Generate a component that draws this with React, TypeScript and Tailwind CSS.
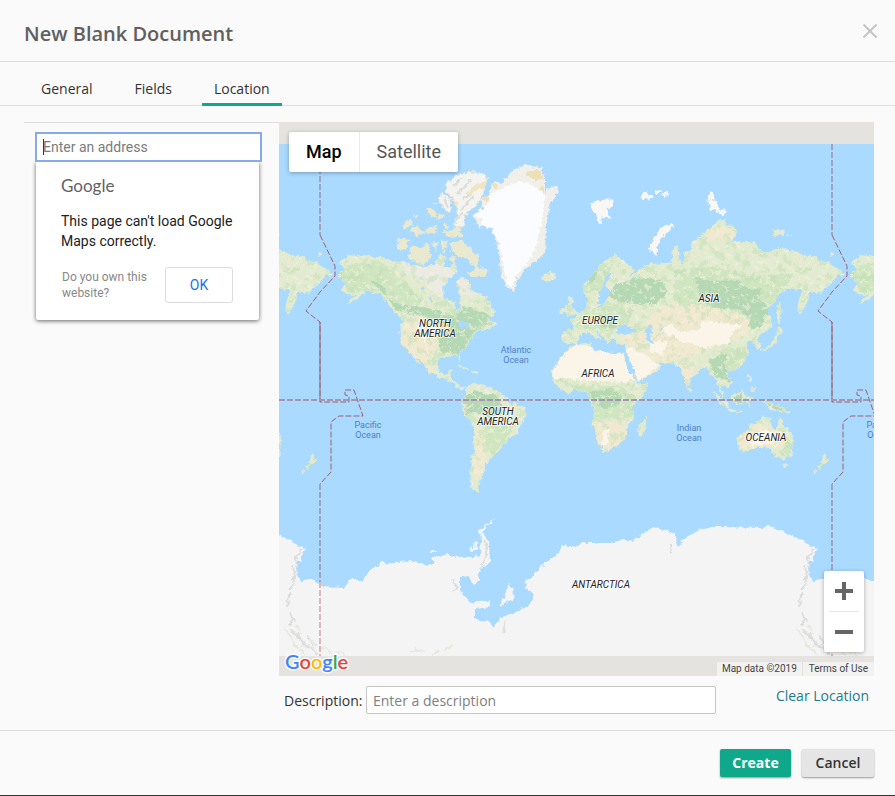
import { useState } from 'react';

const tabs = ['General', 'Fields', 'Location'];

const northAmerica =
  'M338 275L345 268L340 263L350 255L366 256L388 260L403 262L421 267L435 265L440 253L445 258L443 267L449 268L455 263L455 273L448 279L443 287L443 298L455 303L458 313L461 303L460 293L456 283L461 278L468 280L471 290L478 293L486 297L495 313L485 320L497 323L490 328L478 330L470 340L460 353L461 362L458 355L441 357L437 360L438 373L445 375L451 369L451 377L456 385L466 388L461 389L451 382L430 373L425 365L415 353L420 365L411 353L401 343L400 330L403 320L393 310L388 303L381 293L368 290L358 298L346 304L356 295L341 292L345 283Z';
const southAmerica =
  'M466 388L475 384L491 388L505 397L508 403L525 407L526 412L518 432L506 440L498 453L488 460L485 465L482 477L478 483L480 493L471 488L470 477L473 457L475 427L468 418L461 405L465 397Z';
const africa =
  'M575 345L590 343L592 350L605 353L622 353L628 370L638 384L649 383L645 392L632 407L634 418L627 425L625 438L617 447L603 452L598 440L593 425L595 410L590 400L588 392L575 389L568 393L553 382L552 372L561 357L571 347ZM647 418L643 435L638 437L638 427Z';
const eurasia =
  'M563 332L563 343L576 343L582 333L588 332L597 339L600 338L593 329L600 333L608 343L612 338L615 338L617 343L625 345L623 353L638 382L658 370L660 365L645 355L655 362L672 363L680 367L687 388L692 377L703 367L710 372L717 380L723 397L720 384L727 388L732 383L727 372L742 365L748 353L745 342L753 340L757 350L760 347L757 338L772 327L768 310L775 300L788 287L802 290L798 307L800 314L808 302L808 293L822 292L838 275L846 275L835 267L822 260L802 255L782 248L762 253L755 243L732 242L738 230L725 223L722 219L702 235L692 243L693 252L685 252L682 270L677 245L672 253L673 263L645 265L638 272L625 280L635 270L615 255L602 263L583 287L588 300L586 308L578 315L571 320L575 328Z';
const oceania =
  'M738 437L739 448L742 452L760 446L771 448L774 455L783 459L790 456L794 444L791 434L784 426L780 417L777 430L771 427L770 418L761 417L757 424L751 425L746 432ZM783 464L787 464L785 468ZM824 454L828 460L820 468L814 473L822 463Z';
const islands =
  // british isles, iceland, japan, south east asia, new guinea, caribbean
  'M568 299L573 297L571 304L578 313L567 316L569 308ZM562 308L566 305L567 312L561 313ZM543 274L552 272L556 277L549 281L543 279ZM761 351L769 346L775 338L778 334L776 344L768 348L762 351ZM777 333L779 327L784 331L779 334ZM779 301L781 312L779 325L777 312ZM748 374L751 376L750 382ZM752 387L755 388L753 392ZM732 396L742 391L745 395L742 404L735 403L732 399ZM713 392L726 401L729 409L720 402ZM728 409L744 412L728 411ZM747 397L752 397L748 402L751 408L746 403ZM762 401L772 404L782 407L789 413L778 411L770 409ZM690 388L692 392L690 392ZM458 366L468 369L460 367ZM471 370L479 373L472 373Z';
const arcticIslands =
  'M453 243L461 240L470 248L480 257L478 267L488 270L485 277L470 277L466 273L475 269L466 257L458 257L453 250ZM399 238L410 240L406 247L400 252L397 246ZM411 245L420 248L428 242L431 255L425 264L415 263L408 257ZM401 225L410 219L413 224L404 230ZM411 229L419 225L425 234L415 237ZM426 207L434 209L438 219L428 214ZM430 227L438 226L434 235L426 232ZM443 230L461 231L463 236L448 237ZM444 222L450 226L445 229ZM438 213L444 216L440 220ZM432 242L438 241L436 251ZM441 240L448 242L443 253ZM449 258L455 256L456 262L450 262ZM450 243L454 243L451 253ZM413 214L419 216L414 218ZM434 201L438 203L434 204ZM452 229L458 225L462 229L456 232ZM318 252L323 253L319 255ZM775 229L783 230L784 235L772 236ZM787 233L793 236L788 236Z';
const ellesmere =
  'M448 182L456 176L468 172L482 174L489 179L483 188L482 196L476 205L466 214L463 227L453 225L457 218L457 206L452 198L445 190ZM441 192L450 198L451 213L443 208L439 200Z';
const polarIsles =
  'M591 204L604 200L613 200L612 207L605 209L610 218L602 217L600 224L596 215ZM641 198L645 193L652 196L650 199ZM656 190L661 192L657 194ZM663 195L669 191L668 195ZM707 200L711 191L716 199ZM709 201L716 201L719 210L711 210ZM718 210L726 210L724 216L718 214ZM649 249L655 236L663 227L674 223L669 231L662 237L657 246L656 255Z';
const greenlandRim =
  'M473 215L483 208L480 199L488 196L490 188L495 181L501 184L507 178L511 171L526 165L541 168L545 180L545 192L551 186L559 187L557 194L550 203L546 227L545 253L528 267L516 280L514 292L508 288L501 275L500 260L496 240L491 228L478 226Z';
const greenlandIce =
  'M473 216L486 206L492 193L506 187L516 182L527 182L538 188L545 197L543 215L539 235L535 251L527 263L516 276L512 288L507 283L504 270L502 256L499 243L493 229L480 225L483 219Z';
const antarctica =
  'M320 586L345 587L351 578L363 581L368 572L381 563L411 561L425 565L433 563L433 557L448 555L461 558L480 555L481 537L478 531L495 518L483 532L489 543L490 560L478 572L480 580L475 585L468 577L460 578L460 590L470 603L491 600L490 607L475 609L475 617L481 621L491 622L493 627L501 617L516 612L533 602L532 592L525 588L526 582L545 563L561 552L561 545L578 547L582 543L612 543L623 539L632 541L653 526L675 533L675 540L679 547L682 540L702 528L718 527L762 528L768 526L783 532L802 540L807 545L818 548L810 563L808 572L812 582L823 578L832 586L836 586V668H316V586ZM508 583L514 588L513 600L500 606L505 597ZM430 551L440 551L432 553ZM475 538L478 548L474 552L469 550L474 547Z';
const land = northAmerica + southAmerica + africa + eurasia + oceania + islands;

const tundra =
  'M403 262L443 262L456 272L443 287L444 299L456 304L458 310L440 297L425 284L408 273ZM456 283L461 278L468 280L478 293L470 297L461 293Z';
const forest =
  'M388 299L402 305L428 308L455 318L463 307L475 309L492 316L490 325L478 327L466 343L459 355L441 352L438 340L446 328L430 317L408 314L395 309ZM370 280L381 284L391 300L378 288ZM463 396L475 391L495 395L502 403L504 412L490 418L478 413L466 414ZM590 391L612 390L622 395L620 404L604 409L594 402ZM606 296L616 284L640 277L661 280L668 293L655 304L630 304ZM695 278L715 281L738 280L750 290L762 288L760 300L772 310L762 326L751 330L742 310L715 307L700 301ZM709 361L727 351L725 370L731 382L716 378ZM596 315L611 316L616 328L602 327ZM589 268L599 263L595 279L586 288ZM733 397L742 393L742 404L735 402ZM764 402L785 409L776 410Z';
const meadow =
  'M338 268L378 259L403 281L423 301L402 309L384 291L348 292ZM441 310L475 308L486 325L463 350L441 355L436 335ZM485 424L505 417L510 432L494 455L484 450L480 438ZM578 313L592 310L612 305L633 309L629 322L610 330L585 329ZM583 293L602 263L612 264L604 291ZM674 270L713 267L755 275L792 274L785 290L765 310L747 328L740 316L698 307L674 302ZM723 349L746 347L746 362L725 374L706 368ZM556 379L585 386L620 386L635 397L632 417L620 419L597 418L592 402ZM777 430L783 427L793 445L789 457L781 455L786 444Z';
const steppe =
  'M403 326L418 316L431 320L438 330L434 350L427 362L437 375L430 374L400 341ZM650 315L670 302L700 306L730 310L750 319L748 334L720 345L700 352L668 363L640 350L622 342L617 336L648 333L645 326ZM475 425L482 433L487 447L485 465L478 483L473 470ZM593 422L610 421L632 427L626 439L615 449L602 452ZM738 437L757 424L777 429L786 436L782 448L761 447L742 452ZM677 363L692 359L695 370L687 386ZM722 226L739 232L735 241L702 240L705 233ZM624 345L646 354L672 362L660 366L640 383Z';
const desert =
  'M552 373L561 357L575 344L622 352L636 378L628 382L590 381L553 378ZM625 347L642 352L659 366L639 382L629 363ZM670 333L697 330L735 329L728 343L705 347L684 343ZM703 321L728 323L744 325L732 332L700 331ZM660 328L672 324L680 334L667 336ZM749 436L765 430L779 435L772 444L752 445ZM418 330L428 334L425 342ZM650 340L666 342L663 355L650 351ZM603 430L609 430L608 443L601 447Z';
const inlandSea =
  'M608 273L611 275L605 286L610 291L604 303L599 307L599 294L603 285ZM604 290L615 292L605 295ZM616 333L620 325L629 326L638 331L628 335ZM645 331L649 325L653 330L650 335L653 343L648 342ZM455 323L466 321L469 329L460 326ZM430 296L433 301L431 303ZM422 287L428 289L422 290ZM660 328L665 327L663 331ZM620 347L625 348L637 380L634 379Z';
const dateLine =
  'M320 235L335 266V276L320 292L306 311L320 322V402H349V396L345 395V390H354L363 416H339L331 422V472L320 484';

// one copy of the world, repeated on both sides of the date line
function World() {
  return (
    <g id="world">
      <g filter="url(#coast)">
        <path d={land} fill="#e2ebcf" stroke="#e2ebcf" strokeWidth="1" />
        <g clipPath="url(#land-clip)">
          <path d={meadow} fill="#cfe6c1" />
          <path d={forest} fill="#b4d8b3" />
          <path d={steppe} fill="#f0e9cf" />
          <path d={tundra} fill="#ecebe3" />
          <rect x="320" y="220" width="530" height="280" filter="url(#woods)" opacity="0.45" />
          <rect x="320" y="220" width="530" height="280" filter="url(#relief)" opacity="0.6" />
          <path d={desert} fill="#faf5e8" />
        </g>
        <path d={inlandSea} fill="#aadaff" />
        <path d={arcticIslands} fill="#e9e9cf" />
        <path d={ellesmere} fill="#f3f3f0" stroke="#e6e4da" />
        <path
          d="M452 186L463 178M458 193L471 180M463 200L478 186M461 210L474 196M444 197L448 208M457 220L462 213"
          stroke="#dcdcd8"
          strokeWidth="2"
          fill="none"
        />
        <path d="M464 194L476 185L487 180L484 187L470 194ZM453 200L458 202L456 210ZM448 232L459 233L452 235Z" fill="#efe5c4" />
        <path d={polarIsles} fill="#f8f7f4" stroke="#f8f7f4" />
        <path d={greenlandRim} fill="#f0efea" />
        <path d="M527 170L540 170L544 179L536 181L527 175ZM482 198L489 196L489 201L483 202ZM491 183L497 184L497 190ZM540 186L544 190L543 197Z" fill="#ede0b9" />
        <path d={greenlandIce} fill="#fbfcff" />
      </g>
      <path d={antarctica} fill="#f4f4f4" filter="url(#ice-edge)" />
      <g fill="none" filter="url(#ice-edge)">
        <path
          d="M814 549L808 558L809 566M805 566L807 576L804 582M807 583L801 590M803 593L798 602M799 598L800 606M801 612L805 620L801 626M805 616L808 623M803 630L811 638M810 633L815 645M814 641L821 648M819 636L826 646M823 647L829 655M484 540L487 548L485 560L481 566M453 579L457 588L454 592M671 544L672 554M506 621L503 632"
          stroke="#dddddd"
          strokeWidth="2"
        />
        <path
          d="M797 628L803 638M802 637L811 650M812 648L818 655M808 626L812 630M825 640L829 647M322 646L334 655M336 651L344 655M410 653L416 650L424 652M432 655L438 650M444 651L452 645"
          stroke="#e8e8de"
          strokeWidth="2"
        />
      </g>
    </g>
  );
}

function DateLine() {
  return (
    <g id="date-line" fill="none" strokeWidth="1">
      <path d="M320 144V235M320 484V582" stroke="#a3a3c0" strokeWidth="2" strokeDasharray="6 2" />
      <path d="M320 322V402" stroke="#a3a3c0" strokeWidth="2" />
      <path d={dateLine} stroke="#a0606f" strokeDasharray="6 2" />
      <path d="M320 582V656" stroke="#dbb8bb" strokeWidth="2" strokeDasharray="6 2" />
    </g>
  );
}

function WorldMap() {
  return (
    <svg
      viewBox="279 122 595 554"
      preserveAspectRatio="xMidYMid slice"
      className="block h-full w-full"
      role="img"
      aria-label="World map"
    >
      <defs>
        <filter id="coast" filterUnits="userSpaceOnUse" x="300" y="150" width="560" height="360" colorInterpolationFilters="sRGB">
          <feTurbulence type="fractalNoise" baseFrequency="0.22" numOctaves="3" seed="4" />
          <feDisplacementMap in="SourceGraphic" scale="6" xChannelSelector="R" yChannelSelector="G" />
        </filter>
        <filter id="ice-edge" filterUnits="userSpaceOnUse" x="320" y="500" width="512" height="180" colorInterpolationFilters="sRGB">
          <feTurbulence type="fractalNoise" baseFrequency="0.2" numOctaves="2" seed="9" />
          <feDisplacementMap in="SourceGraphic" scale="6" xChannelSelector="R" yChannelSelector="G" />
        </filter>
        <filter id="woods" x="0" y="0" width="1" height="1" colorInterpolationFilters="sRGB">
          <feTurbulence type="fractalNoise" baseFrequency="0.12" numOctaves="4" seed="12" />
          <feColorMatrix values="0 0 0 0 0.74  0 0 0 0 0.87  0 0 0 0 0.70  0 9 0 0 -4.8" />
        </filter>
        <filter id="relief" x="0" y="0" width="1" height="1" colorInterpolationFilters="sRGB">
          <feTurbulence type="fractalNoise" baseFrequency="0.2" numOctaves="3" seed="31" />
          <feColorMatrix values="0 0 0 0 0.95  0 0 0 0 0.94  0 0 0 0 0.87  0 0 9 0 -5.2" />
        </filter>
        <clipPath id="land-clip">
          <path d={land} />
        </clipPath>
      </defs>
      <rect x="279" y="122" width="595" height="554" fill="#e5e3df" />
      <rect x="279" y="144" width="595" height="512" fill="#aadaff" />
      <World />
      <use href="#world" x="-512" />
      <use href="#world" x="512" />
      <DateLine />
      <use href="#date-line" x="512" />
      <rect x="279" y="656" width="595" height="20" fill="#e5e3df" />
      <path d="M279 400H874" stroke="#a795ae" strokeWidth="2" strokeDasharray="6 2" />
      <g
        className="font-['Roboto',sans-serif] text-[10px] italic"
        fill="#222"
        stroke="#fff"
        strokeWidth="2"
        strokeOpacity="0.7"
        paintOrder="stroke"
        textAnchor="middle"
      >
        <text x="435" y="327">NORTH</text>
        <text x="435" y="337">AMERICA</text>
        <text x="498" y="415">SOUTH</text>
        <text x="498" y="425">AMERICA</text>
        <text x="600" y="324">EUROPE</text>
        <text x="709" y="302">ASIA</text>
        <text x="598" y="377">AFRICA</text>
        <text x="766" y="441">OCEANIA</text>
        <text x="601" y="588">ANTARCTICA</text>
      </g>
      <g className="font-['Roboto',sans-serif] text-[9px]" fill="#4f80c4" textAnchor="middle">
        <text x="368" y="428">Pacific</text>
        <text x="368" y="438">Ocean</text>
        <text x="880" y="428">Pacific</text>
        <text x="880" y="438">Ocean</text>
        <text x="516" y="353">Atlantic</text>
        <text x="516" y="363">Ocean</text>
        <text x="689" y="431">Indian</text>
        <text x="689" y="441">Ocean</text>
      </g>
    </svg>
  );
}

export default function App() {
  const [activeTab, setActiveTab] = useState('Location');
  const [mapType, setMapType] = useState('Map');

  return (
    <div className="border-b border-[#333] bg-[#fafafa] font-['Open_Sans',sans-serif] text-sm text-[#333]">
      {/* Header */}
      <header className="flex h-[62px] items-center justify-between border-b border-[#dedede] pt-[6px] pr-[18px] pl-6">
        <h1 className="text-xl font-[560] text-[#606060]">New Blank Document</h1>
        <button aria-label="Close" className="pb-[6px] text-[#c4c4c4]">
          <svg viewBox="0 0 14 14" className="size-[14px]" fill="none" stroke="currentColor" strokeWidth="2">
            <path d="M0.5 0.5L13.5 13.5M13.5 0.5L0.5 13.5" />
          </svg>
        </button>
      </header>

      {/* Tabs */}
      <nav className="flex h-11 items-end gap-[18px] border-b border-[#dedede] pl-[29px]">
        {tabs.map((tab) => (
          <button
            key={tab}
            onClick={() => setActiveTab(tab)}
            className={`-mb-px h-8 border-b-3 px-3 ${
              activeTab === tab ? 'border-[#10a88b]' : 'border-transparent'
            }`}
          >
            {tab}
          </button>
        ))}
      </nav>

      {/* Location */}
      <main className="flex pt-4 pr-[21px] pl-6">
        <div className="w-[255px] shrink-0 border-t border-[#dedede] pt-[9px] pl-[11px] font-['Roboto',sans-serif]">
          <div className="relative w-[227px]">
            <input
              aria-label="Address"
              placeholder="Enter an address"
              className="block h-[30px] w-full border-2 border-[#86abe9] bg-white px-[6px] text-sm outline-none placeholder:text-[#7b7b7b]"
            />
            <span className="absolute top-[7px] left-2 h-4 w-px bg-[#333]" />
          </div>
          <section className="ml-px h-[158px] w-[223px] rounded-b-xs bg-white px-[25px] pt-3 shadow-[0_1px_4px_rgba(0,0,0,0.6)]">
            <p className="font-['Lato',sans-serif] text-[17px] leading-6 text-[#5f6368]">Google</p>
            <p className="mt-[13px] text-sm leading-5 whitespace-nowrap text-[#212121]">
              This page can't load Google
              <br />
              Maps correctly.
            </p>
            <div className="mt-4 flex items-center gap-1">
              <a href="#" className="w-[100px] pl-px text-xs leading-4 text-[#888]">
                Do you own this website?
              </a>
              <button className="h-9 w-[68px] rounded-[3px] border border-[#dadce0] text-sm text-[#1a73e8]">OK</button>
            </div>
          </section>
        </div>

        <div className="min-w-0 flex-1">
          <div className="relative h-[554px] overflow-hidden font-['Roboto',sans-serif]">
            <WorldMap />
            <div className="absolute top-[10px] left-[10px] flex h-10 rounded-xs bg-white text-lg shadow-[0_1px_4px_rgba(0,0,0,0.3)]">
              {['Map', 'Satellite'].map((type) => (
                <button
                  key={type}
                  onClick={() => setMapType(type)}
                  className={`px-[17px] not-first:border-l not-first:border-[#ebebeb] ${
                    mapType === type ? 'font-medium text-black' : 'text-[#565656]'
                  }`}
                >
                  {type}
                </button>
              ))}
            </div>
            <div className="absolute right-[10px] bottom-6 flex w-10 flex-col items-center rounded-xs bg-white shadow-[0_1px_4px_rgba(0,0,0,0.3)]">
              <button aria-label="Zoom in" className="flex h-10 w-10 items-center justify-center">
                <svg viewBox="0 0 18 18" className="size-[18px]" fill="#666">
                  <path d="M7 0h4v7h7v4h-7v7H7v-7H0V7h7z" />
                </svg>
              </button>
              <span className="h-px w-[30px] bg-[#e6e6e6]" />
              <button aria-label="Zoom out" className="flex h-10 w-10 items-center justify-center">
                <svg viewBox="0 0 18 18" className="size-[18px]" fill="#666">
                  <path d="M0 7h18v4H0z" />
                </svg>
              </button>
            </div>
            <a href="#" aria-label="Google" className="absolute bottom-0 left-[5px]">
              <svg
                viewBox="0 0 66 28"
                className="h-7 w-[66px] font-['Lato',sans-serif] text-[20px] font-semibold"
                stroke="#fff"
                strokeWidth="3"
                strokeOpacity="0.8"
                paintOrder="stroke"
              >
                <text x="1" y="21">
                  <tspan fill="#4285f4">G</tspan>
                  <tspan fill="#ea4335">o</tspan>
                  <tspan fill="#fbbc05">o</tspan>
                  <tspan fill="#4285f4">g</tspan>
                  <tspan fill="#34a853">l</tspan>
                  <tspan fill="#ea4335">e</tspan>
                </text>
              </svg>
            </a>
            <div className="absolute right-0 bottom-0 flex h-[14px] bg-[#f2f2f0] text-[10px] leading-[14px] text-[#444]">
              <span className="px-[5px]">Map data ©2019</span>
              <a href="#" className="border-l border-[#e0e0dd] px-[6px]">
                Terms of Use
              </a>
            </div>
          </div>

          <div className="flex h-[54px] items-start pt-[10px] pr-[5px] pl-[5px]">
            <label htmlFor="description" className="w-[82px] shrink-0 leading-[30px] whitespace-nowrap">
              Description:
            </label>
            <input
              id="description"
              placeholder="Enter a description"
              className="h-7 w-[350px] rounded-xs border border-[#c6c6c6] bg-white px-[6px] text-sm outline-none placeholder:text-[#808080]"
            />
            <a href="#" className="ml-auto leading-5 whitespace-nowrap text-[#1f7a8c]">
              Clear Location
            </a>
          </div>
        </div>
      </main>

      {/* Footer */}
      <footer className="flex h-[65px] justify-end gap-[11px] border-t border-[#dedede] pt-[18px] pr-[21px]">
        <button className="h-7 w-[71px] rounded-xs bg-[#10a88b] font-bold text-white shadow-[0_1px_2px_rgba(0,0,0,0.4)]">
          Create
        </button>
        <button className="h-7 w-[72px] rounded-xs bg-[#e5e5e5] font-[560] text-[#333] shadow-[0_1px_2px_rgba(0,0,0,0.4)]">
          Cancel
        </button>
      </footer>
    </div>
  );
}
